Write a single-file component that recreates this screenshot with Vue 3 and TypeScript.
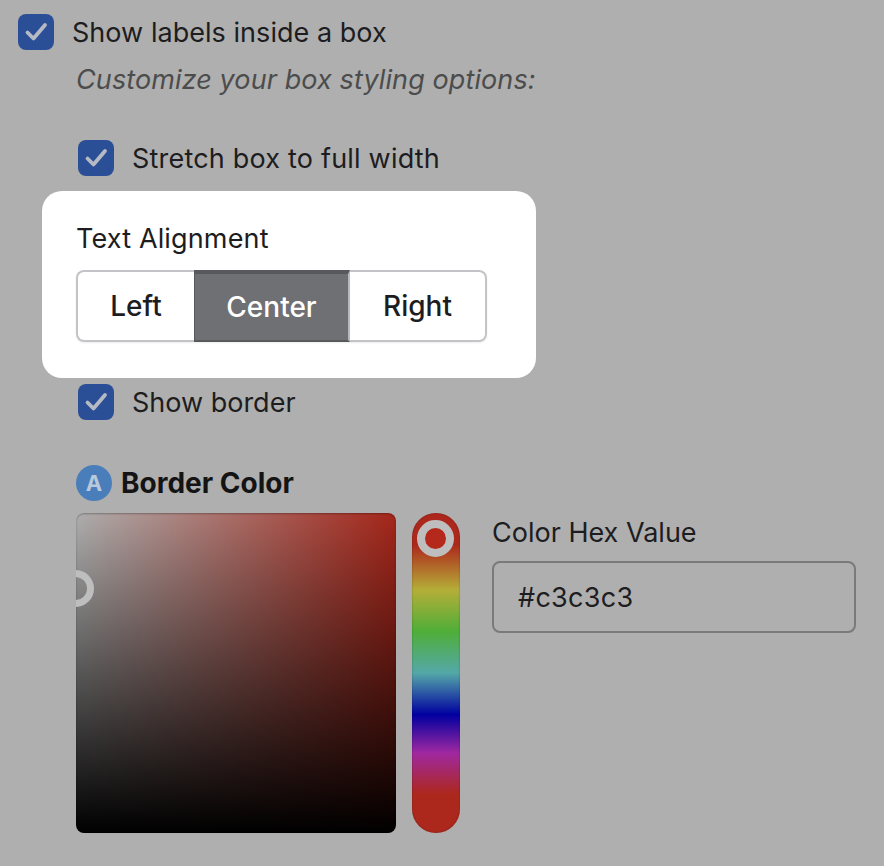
<script setup lang="ts">
import { ref } from 'vue'

const alignments = ['Left', 'Center', 'Right']
const alignment = ref('Center')
const hex = ref('#c3c3c3')
</script>

<template>
  <div class="page">
    <label class="checkRow">
      <span class="checkBox">
        <svg viewBox="0 0 36 36" width="36" height="36"><path d="M9.5 18.5l6 6L27 11" /></svg>
      </span>
      <span class="tight">Show labels inside a box</span>
    </label>
    <p class="hint">Customize your box styling options:</p>

    <div class="options">
      <label class="checkRow">
        <span class="checkBox">
          <svg viewBox="0 0 36 36" width="36" height="36"><path d="M9.5 18.5l6 6L27 11" /></svg>
        </span>
        <span class="wide">Stretch box to full width</span>
      </label>

      <div class="card">
        <div class="cardLabel">Text Alignment</div>
        <div class="btnGroup">
          <button
            v-for="item in alignments"
            :key="item"
            class="btn"
            :class="[item.toLowerCase(), { active: item === alignment }]"
            @click="alignment = item"
          >
            {{ item }}
          </button>
        </div>
      </div>

      <label class="checkRow borderRow">
        <span class="checkBox">
          <svg viewBox="0 0 36 36" width="36" height="36"><path d="M9.5 18.5l6 6L27 11" /></svg>
        </span>
        <span>Show border</span>
      </label>
    </div>

    <div class="colorSection">
      <div class="colorTitle">
        <span class="badge">A</span>
        <strong>Border Color</strong>
      </div>
      <div class="pickerRow">
        <div class="satPanel">
          <span class="satThumb"></span>
        </div>
        <div class="hueBar">
          <span class="hueThumb"></span>
        </div>
        <div class="hexField">
          <label for="hex">Color Hex Value</label>
          <input id="hex" v-model="hex" type="text" />
        </div>
      </div>
    </div>
  </div>
</template>

<style scoped>
.page {
  box-sizing: border-box;
  height: 866px;
  padding: 14px 0 0 18px;
  font-family: Inter, "Liberation Sans", sans-serif;
  font-size: 27px;
  color: #1d1d1f;
  overflow: hidden;
}

.checkRow {
  display: flex;
  align-items: center;
  gap: 18px;
  height: 36px;
}

.tight {
  letter-spacing: 0.04px;
}

.wide {
  letter-spacing: 0.2px;
}

.checkBox {
  width: 36px;
  height: 36px;
  flex: none;
  border-radius: 8px;
  background: #2b4f96;
}

.checkBox svg {
  display: block;
  fill: none;
  stroke: #b5bac4;
  stroke-width: 3.8;
  stroke-linecap: round;
  stroke-linejoin: round;
}

.hint {
  margin: 13px 0 0 58px;
  line-height: 34px;
  letter-spacing: 0.1px;
  font-style: italic;
  color: #4c4c4c;
}

.options {
  margin: 43px 0 0 60px;
}

.card {
  box-sizing: border-box;
  width: 494px;
  height: 187px;
  margin: 15px 0 6px -36px;
  padding: 30px 34px;
  border-radius: 20px;
  background: #fff;
}

.cardLabel {
  line-height: 34px;
  margin-top: 1px;
  letter-spacing: 0.15px;
}

.btnGroup {
  display: flex;
  width: 411px;
  height: 72px;
  margin-top: 14px;
  border-radius: 8px;
  box-shadow: 0 1px 2px rgba(0, 0, 0, 0.08);
}

.btn {
  box-sizing: border-box;
  height: 72px;
  padding: 0;
  border: 2px solid #c3c3c8;
  background: #fff;
  font: inherit;
  font-size: 28px;
  font-weight: 450;
  color: #1d1d1f;
}

.btn.left {
  width: 118px;
  border-right: 0;
  border-radius: 8px 0 0 8px;
}

.btn.center {
  width: 156px;
}

.btn.right {
  width: 137px;
  border-left: 0;
  border-radius: 0 8px 8px 0;
}

.btn.active {
  background: #6e7074;
  border-top: 4px solid #58595d;
  border-bottom: 2px solid #58595d;
  border-left: 1px solid #58595d;
  border-right: 2px solid #b8b8be;
  color: #fff;
}

.colorSection {
  margin: 45px 0 0 58px;
}

.colorTitle {
  display: flex;
  align-items: center;
  gap: 9px;
  height: 36px;
}

.colorTitle strong {
  font-size: 28px;
  font-weight: 700;
  color: #141414;
}

.badge {
  width: 36px;
  height: 36px;
  border-radius: 50%;
  background: #4a7ebb;
  color: #b9c8da;
  font-size: 22px;
  font-weight: 700;
  display: flex;
  align-items: center;
  justify-content: center;
}

.pickerRow {
  display: flex;
  align-items: flex-start;
  margin-top: 12px;
}

.satPanel {
  position: relative;
  width: 320px;
  height: 320px;
  border-radius: 8px;
  overflow: hidden;
  box-shadow: inset 0 1px 2px rgba(0, 0, 0, 0.3);
  background:
    linear-gradient(to top, #000, rgba(0, 0, 0, 0)),
    linear-gradient(to right, #aeaeae, #a5261a);
}

.satThumb {
  position: absolute;
  left: -19px;
  top: 57px;
  box-sizing: border-box;
  width: 37px;
  height: 37px;
  border: 7px solid #bebebe;
  border-radius: 50%;
}

.hueBar {
  position: relative;
  width: 48px;
  height: 320px;
  margin-left: 16px;
  flex: none;
  border-radius: 24px;
  box-shadow: inset 0 0 2px rgba(0, 0, 0, 0.35);
  background: linear-gradient(
    to bottom,
    #ad281c 10%,
    #b5ae38 24%,
    #4fae38 37%,
    #54a8a8 50%,
    #0000a0 63%,
    #a028a0 75%,
    #ad281c 88%
  );
}

.hueThumb {
  position: absolute;
  left: 5px;
  top: 7px;
  box-sizing: border-box;
  width: 37px;
  height: 37px;
  border: 8.5px solid #bebebe;
  border-radius: 50%;
  background: #b5281c;
}

.hexField {
  margin-left: 32px;
}

.hexField label {
  display: block;
  line-height: 34px;
  margin-top: 3px;
}

.hexField input {
  display: block;
  box-sizing: border-box;
  width: 364px;
  height: 72px;
  margin-top: 11px;
  padding: 0 24px;
  border: 2px solid #7a7a7a;
  border-radius: 8px;
  background: transparent;
  font: inherit;
  letter-spacing: 0.3px;
  color: #1d1d1f;
  outline: none;
}
</style>

<style>
html,
body {
  background: #afafaf;
}
</style>
